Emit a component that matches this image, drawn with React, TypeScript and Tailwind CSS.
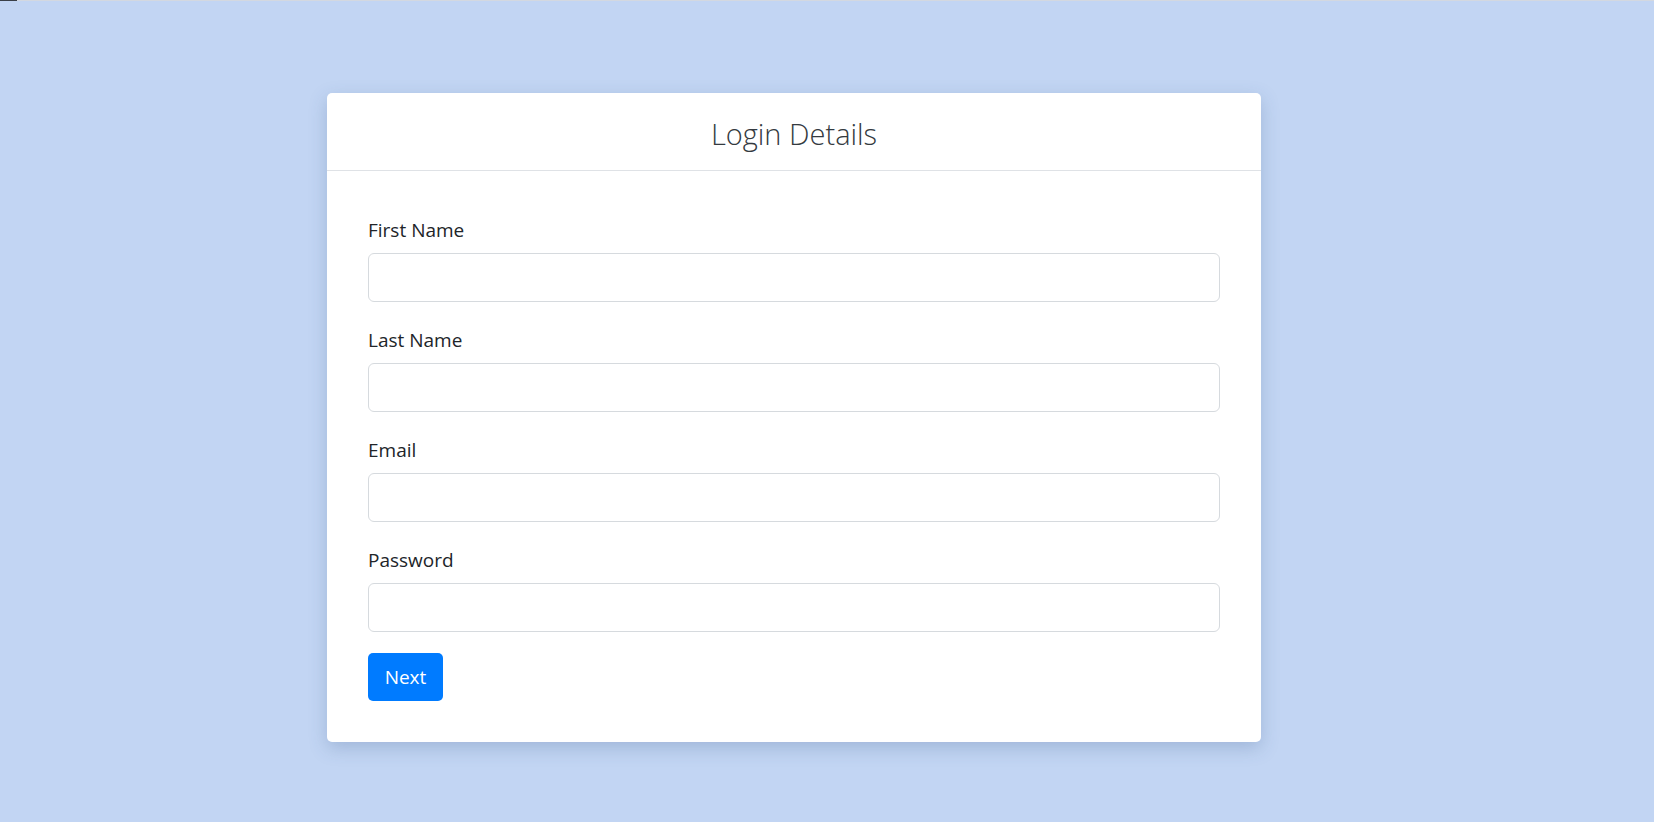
import { useState } from 'react';

const fields = [
  { key: 'first', label: 'First Name', type: 'text' },
  { key: 'last', label: 'Last Name', type: 'text' },
  { key: 'email', label: 'Email', type: 'email' },
  { key: 'password', label: 'Password', type: 'password' },
];

export default function App() {
  const [values, setValues] = useState<Record<string, string>>({});

  return (
    <div className="min-h-[822px] bg-[#c2d5f3] font-['Open_Sans','Noto_Sans',sans-serif]">
      {/* thin strip at the very top */}
      <div className="flex h-[1px] bg-[#d3d8e0]">
        <div className="w-[17px] bg-[#3a3f47]" />
      </div>
      <div className="flex justify-center pr-[66px] pt-[92px]">
        <div className="w-[934px] rounded-[5px] bg-white shadow-[0_6px_18px_rgba(60,90,140,0.25)]">
          <div className="flex h-[78px] items-center justify-center border-b border-[#dfe2e6] pt-[4px]">
            <h1 className="text-[29px] font-light leading-none text-[#343a40]">Login Details</h1>
          </div>
          <form
            className="flex flex-col px-[41px] pb-[41px] pt-[44px]"
            onSubmit={(e) => e.preventDefault()}
          >
            {fields.map((f, i) => (
              <div
                key={f.key}
                className={i === fields.length - 1 ? 'mb-[21px] flex flex-col' : 'mb-[23px] flex flex-col'}
              >
                <label className="mb-[8px] text-[19px] leading-[30px] text-[#212529]">{f.label}</label>
                <input
                  type={f.type}
                  value={values[f.key] ?? ''}
                  onChange={(e) => setValues({ ...values, [f.key]: e.target.value })}
                  className="h-[49px] w-full rounded-[6px] border border-[#d6dade] bg-white px-[15px] text-[20px] text-[#495057] outline-none"
                />
              </div>
            ))}
            <div>
              <button
                type="submit"
                className="h-[48px] w-[75px] rounded-[5px] bg-[#007bff] text-[19px] leading-none text-white"
              >
                Next
              </button>
            </div>
          </form>
        </div>
      </div>
    </div>
  );
}
